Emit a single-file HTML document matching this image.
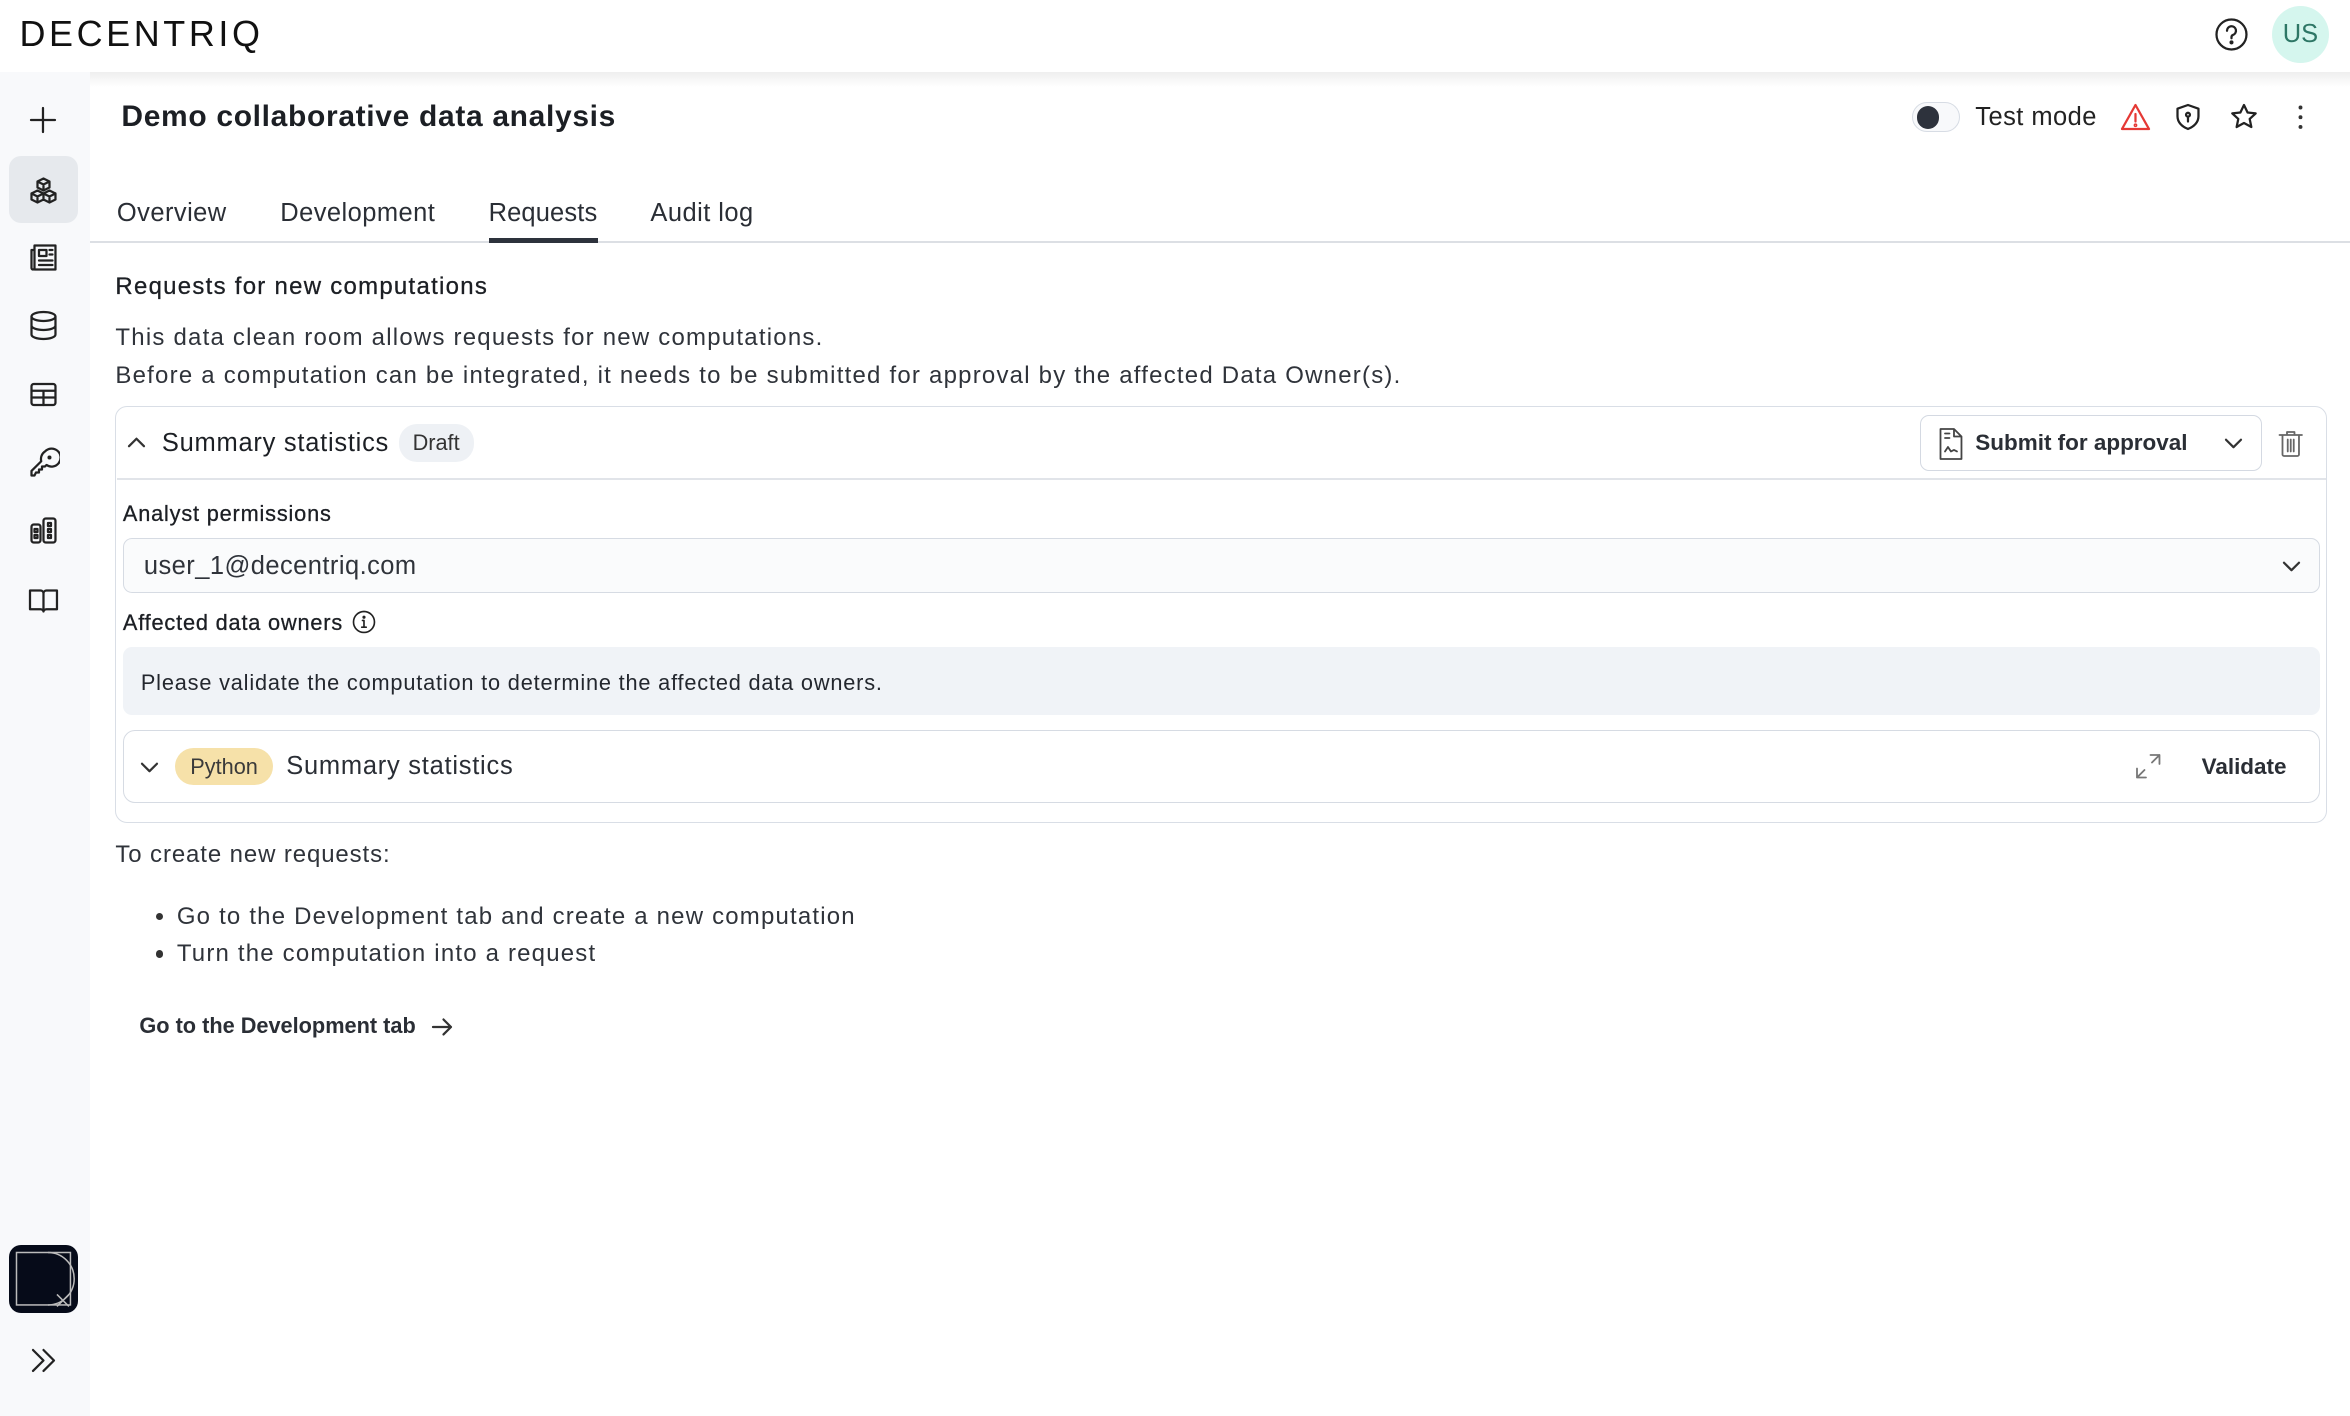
<!DOCTYPE html>
<html><head><meta charset="utf-8"><style>
html,body{margin:0;padding:0;background:#fff;overflow:hidden}
html{width:2350px;height:1416px}
body{zoom:1.4987;width:1568px;height:945px;position:relative;font-family:"Liberation Sans",sans-serif;color:#1f2329}
.a{position:absolute}
.ic{position:absolute;fill:none;stroke:#222;stroke-width:1.5;stroke-linecap:round;stroke-linejoin:round}
.t{white-space:nowrap}
</style></head><body>
<!-- top bar -->
<div class="a t" style="left:13px;top:9px;font-size:24px;letter-spacing:2.4px;font-weight:300;color:#111">DECENTRIQ</div>
<svg class="ic" style="left:1478px;top:12px" width="22" height="22" viewBox="0 0 22 22"><circle cx="11" cy="11" r="10"/><path d="M8 8.5a3 3 0 1 1 4 2.8c-.7.3-1 .8-1 1.5v.7"/><circle cx="11" cy="16.3" r=".6" fill="#222"/></svg>
<div class="a" style="left:1516px;top:4px;width:38px;height:38px;border-radius:50%;background:#d5f6ee;color:#2e7766;font-size:17px;text-align:center;line-height:38px">US</div>
<!-- sidebar -->
<div class="a" style="left:0;top:48px;width:60px;height:897px;background:#f8f9fb"></div>
<div class="a" style="left:60px;top:48px;width:1508px;height:10px;background:linear-gradient(#eee,#fff0)"></div>
<svg class="ic" style="left:19px;top:70px" width="20" height="20" viewBox="0 0 20 20"><path d="M10 2v16M2 10h16"/></svg>
<div class="a" style="left:6px;top:104px;width:46px;height:45px;border-radius:8px;background:#e6e9ed"></div>
<svg class="ic" style="left:18px;top:116px" width="22" height="22" viewBox="0 0 22 22"><path d="M11 3l4 2v4l-4 2-4-2V5zM7 11l4 2v4l-4 2-4-2v-4zM15 11l4 2v4l-4 2-4-2v-4zM7 5l4 2 4-2M11 7v4M3 13l4 2 4-2M7 15v4M11 13l4 2 4-2M15 15v4"/></svg>
<svg class="ic" style="left:18px;top:161px" width="22" height="22" viewBox="0 0 22 22"><path d="M5 3h14v16H5zM5 6H3v12a1 1 0 0 0 2 0M8 6h5v4H8zM15 6h2M15 9h2M8 13h9M8 16h9"/></svg>
<svg class="ic" style="left:18px;top:206px" width="22" height="22" viewBox="0 0 22 22"><ellipse cx="11" cy="5" rx="8" ry="3"/><path d="M3 5v12c0 1.7 3.6 3 8 3s8-1.3 8-3V5M3 11c0 1.7 3.6 3 8 3s8-1.3 8-3"/></svg>
<svg class="ic" style="left:18px;top:252px" width="22" height="22" viewBox="0 0 22 22"><rect x="3" y="4" width="16" height="14" rx="1.5"/><path d="M3 8.5h16M3 13h16M11 8.5V18"/></svg>
<svg class="ic" style="left:18px;top:298px" width="22" height="22" viewBox="0 0 22 22"><path d="M12 3a6 6 0 1 1 1 9l-1 1h-2v2H8v2H6l-1 2H3v-3l6.5-6.5A6 6 0 0 1 12 3z"/><circle cx="15" cy="7" r=".6" fill="#222"/></svg>
<svg class="ic" style="left:18px;top:343px" width="22" height="22" viewBox="0 0 22 22"><rect x="3" y="7" width="6" height="12" rx="1.5"/><rect x="11" y="3" width="8" height="16" rx="1.5"/><path d="M5 10h2v2H5zM5 14h2v2H5zM14 6h2v2h-2zM14 10h2v2h-2zM14 14h2v2h-2z"/></svg>
<svg class="ic" style="left:18px;top:389px" width="22" height="22" viewBox="0 0 22 22"><path d="M2 5h7a2 2 0 0 1 2 2v12a2 2 0 0 0-2-1.5H2zM20 5h-7a2 2 0 0 0-2 2v12a2 2 0 0 1 2-1.5h7z"/></svg>
<div class="a" style="left:6px;top:831px;width:46px;height:45px;border-radius:8px;background:#060b19"></div>
<svg class="a" style="left:6px;top:831px" width="46" height="45" viewBox="0 0 46 45" fill="none" stroke="#bbb" stroke-width="1"><rect x="5" y="5" width="36" height="35"/><path d="M26 5a17.5 17.5 0 0 1 0 35M32 33l8 8M40 33l-8 8"/></svg>
<svg class="ic" style="left:18px;top:897px" width="22" height="22" viewBox="0 0 22 22"><path d="M4 4l7 7-7 7M11 4l7 7-7 7"/></svg>
<!-- header -->
<div class="a t" style="left:81px;top:67px;font-size:20px;font-weight:700;color:#1c1f24;letter-spacing:.45px">Demo collaborative data analysis</div>
<div class="a" style="left:1276px;top:68px;width:32px;height:20px;border-radius:11px;border:1px solid #d7dce4;background:#f8f9fb;box-sizing:border-box"></div>
<div class="a" style="left:1279px;top:71px;width:15px;height:15px;border-radius:50%;background:#2d323c"></div>
<div class="a t" style="left:1318px;top:69px;font-size:17px;color:#222;letter-spacing:.3px">Test mode</div>
<svg class="ic" style="left:1414px;top:68px;stroke:#e53935" width="22" height="20" viewBox="0 0 22 20"><path d="M11 2L20 18H2z"/><path d="M11 8v5"/><circle cx="11" cy="15.5" r=".5"/></svg>
<svg class="ic" style="left:1450px;top:68px" width="20" height="20" viewBox="0 0 20 20"><path d="M10 2l7 2.5v5c0 4-3 7-7 8.5-4-1.5-7-4.5-7-8.5v-5z"/><circle cx="10" cy="8.5" r="1.3"/><path d="M10 10v3"/></svg>
<svg class="ic" style="left:1487px;top:68px" width="20" height="20" viewBox="0 0 20 20"><path d="M10 2l2.4 5 5.4.6-4 3.7 1.1 5.4L10 14l-4.9 2.7 1.1-5.4-4-3.7 5.4-.6z"/></svg>
<svg class="a" style="left:1530px;top:69px" width="10" height="20"><circle cx="5" cy="3" r="1.3" fill="#333"/><circle cx="5" cy="9.5" r="1.3" fill="#333"/><circle cx="5" cy="16" r="1.3" fill="#333"/></svg>
<!-- tabs -->
<div class="a t" style="left:78px;top:133px;font-size:17px;color:#2a2e35;letter-spacing:.3px">Overview</div>
<div class="a t" style="left:187px;top:133px;font-size:17px;color:#2a2e35;letter-spacing:.3px">Development</div>
<div class="a t" style="left:326px;top:133px;font-size:17px;color:#2a2e35;letter-spacing:.1px">Requests</div>
<div class="a t" style="left:434px;top:133px;font-size:17px;color:#2a2e35;letter-spacing:.3px">Audit log</div>
<div class="a" style="left:60px;top:161px;width:1508px;height:1px;background:#dcdfe4"></div>
<div class="a" style="left:326px;top:159px;width:73px;height:3px;background:#2d323c"></div>
<!-- body -->
<div class="a t" style="left:77px;top:182px;font-size:16px;font-weight:500;color:#1c1f24;letter-spacing:.85px;-webkit-text-stroke:.2px #1c1f24">Requests for new computations</div>
<div class="a t" style="left:77px;top:213px;font-size:16px;color:#2f333a;line-height:25px;letter-spacing:.82px">This data clean room allows requests for new computations.<br>Before a computation can be integrated, it needs to be submitted for approval by the affected Data Owner(s).</div>
<!-- card -->
<div class="a" style="left:77px;top:271px;width:1476px;height:278px;border:1px solid #d9dee6;border-radius:8px;box-sizing:border-box"></div>
<div class="a" style="left:78px;top:319px;width:1474px;height:1px;background:#e1e4e9"></div>
<svg class="ic" style="left:84px;top:288px;stroke:#333" width="14" height="14" viewBox="0 0 14 14"><path d="M2 9.5l5-5 5 5"/></svg>
<div class="a t" style="left:108px;top:286px;font-size:17px;color:#1c1f24;letter-spacing:.5px">Summary statistics</div>
<div class="a t" style="left:266px;top:283px;width:50px;height:25px;border-radius:12px;background:#eef1f5;font-size:14.5px;line-height:25px;text-align:center;color:#333">Draft</div>
<div class="a" style="left:1281px;top:277px;width:228px;height:37px;border:1px solid #d4d9e2;border-radius:6px;box-sizing:border-box"></div>
<svg class="ic" style="left:1292px;top:284px;stroke:#444;stroke-width:1.2" width="20" height="24" viewBox="0 0 20 24"><path d="M3 2h9l5 5v15H3zM12 2v5h5M6 5h3M6 8h3M6 17l2-3 2 3 2-1 2 1"/></svg>
<div class="a t" style="left:1318px;top:287px;font-size:15px;font-weight:700;color:#2a2e35">Submit for approval</div>
<svg class="ic" style="left:1483px;top:289px;stroke:#333" width="14" height="14" viewBox="0 0 14 14"><path d="M2 4.5l5 5 5-5"/></svg>
<svg class="ic" style="left:1520px;top:286px;stroke:#666;stroke-width:1.2" width="17" height="19" viewBox="0 0 17 19"><path d="M1 4h15M6 4V2h5v2M3 4h11v13a1 1 0 0 1-1 1H4a1 1 0 0 1-1-1zM6.5 7v8M8.5 7v8M10.5 7v8"/></svg>
<div class="a t" style="left:82px;top:334px;font-size:14.5px;font-weight:500;color:#1c1f24;letter-spacing:.55px;-webkit-text-stroke:.2px #1c1f24">Analyst permissions</div>
<div class="a" style="left:82px;top:359px;width:1466px;height:37px;border:1px solid #d6dbe3;border-radius:6px;background:#fafbfc;box-sizing:border-box"></div>
<div class="a t" style="left:96px;top:368px;font-size:17px;color:#2f333a;letter-spacing:.3px">user_1@decentriq.com</div>
<svg class="ic" style="left:1522px;top:371px;stroke:#333" width="14" height="14" viewBox="0 0 14 14"><path d="M2 4.5l5 5 5-5"/></svg>
<div class="a t" style="left:82px;top:407px;font-size:14.5px;font-weight:500;color:#1c1f24;letter-spacing:.55px;-webkit-text-stroke:.2px #1c1f24">Affected data owners</div>
<svg class="ic" style="left:235px;top:407px;stroke-width:1.1" width="16" height="16" viewBox="0 0 16 16"><circle cx="8" cy="8" r="7"/><path d="M7 7h1v4.5M6.5 11.5h3"/><circle cx="8" cy="4.8" r=".5" fill="#222"/></svg>
<div class="a" style="left:82px;top:432px;width:1466px;height:45px;border-radius:6px;background:#f0f3f7"></div>
<div class="a t" style="left:94px;top:447px;font-size:14.5px;color:#23272e;letter-spacing:.55px">Please validate the computation to determine the affected data owners.</div>
<div class="a" style="left:82px;top:487px;width:1466px;height:49px;border:1px solid #d6dbe3;border-radius:8px;box-sizing:border-box"></div>
<svg class="ic" style="left:93px;top:505px;stroke:#333" width="14" height="14" viewBox="0 0 14 14"><path d="M2 4.5l5 5 5-5"/></svg>
<div class="a t" style="left:117px;top:499px;width:65px;height:25px;border-radius:13px;background:#f6e1a9;font-size:14.5px;line-height:25px;text-align:center;color:#3a3a3a">Python</div>
<div class="a t" style="left:191px;top:502px;font-size:17px;color:#2a2e35;letter-spacing:.5px">Summary statistics</div>
<svg class="ic" style="left:1424px;top:502px;stroke:#777;stroke-width:1.2" width="19" height="19" viewBox="0 0 19 19"><path d="M11 2h6v6M17 2l-5 5M8 17H2v-6M2 17l5-5"/></svg>
<div class="a t" style="left:1469px;top:503px;font-size:15px;font-weight:700;color:#2a2e35">Validate</div>
<!-- bottom -->
<div class="a t" style="left:77px;top:561px;font-size:16px;color:#2f333a;letter-spacing:.6px">To create new requests:</div>
<div class="a" style="left:104px;top:609px;width:5px;height:5px;border-radius:50%;background:#333"></div>
<div class="a" style="left:104px;top:634px;width:5px;height:5px;border-radius:50%;background:#333"></div>
<div class="a t" style="left:118px;top:599px;font-size:16px;color:#2f333a;line-height:25px;letter-spacing:.8px">Go to the Development tab and create a new computation<br>Turn the computation into a request</div>
<div class="a t" style="left:93px;top:676px;font-size:14.5px;font-weight:700;color:#2a2e35">Go to the Development tab</div>
<svg class="ic" style="left:287px;top:677px;stroke:#333" width="16" height="16" viewBox="0 0 16 16"><path d="M2 8h12M9 3l5 5-5 5"/></svg>
</body></html>
